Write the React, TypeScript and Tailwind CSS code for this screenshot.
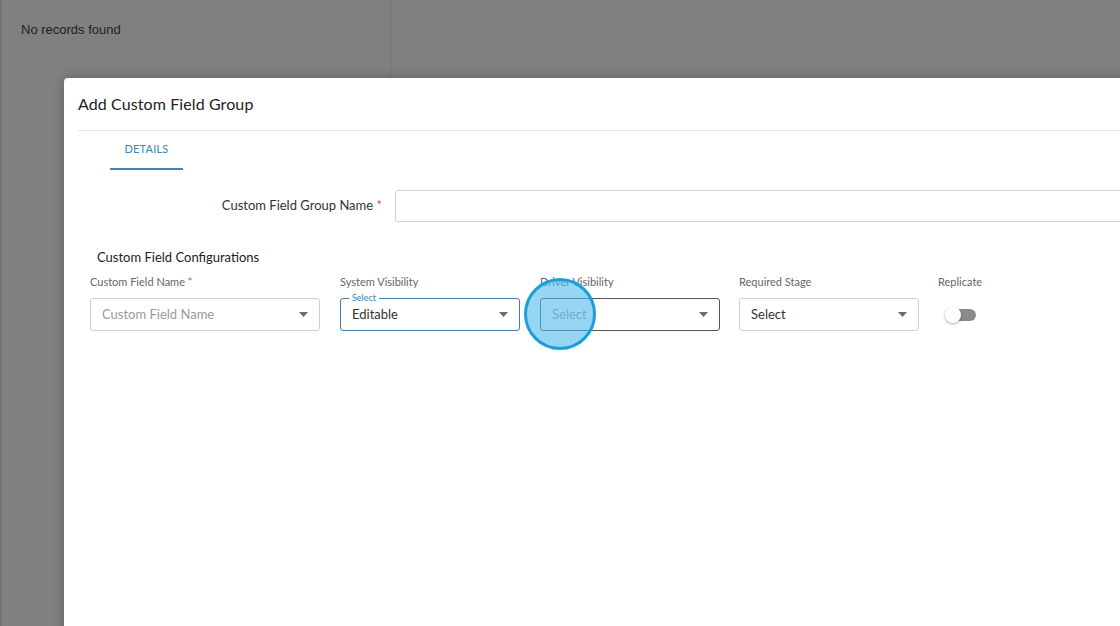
const font = { fontFamily: "Lato, 'Open Sans', sans-serif" };

function Caret() {
  return (
    <svg width="9" height="5" viewBox="0 0 9 5" className="shrink-0">
      <path d="M0 0 L9 0 L4.5 5 Z" fill="#6b6b6b" />
    </svg>
  );
}

interface SelectBoxProps {
  value: string;
  placeholder?: boolean;
  width: string;
  variant?: "default" | "focused" | "hover";
}

function SelectBox({ value, placeholder, width, variant = "default" }: SelectBoxProps) {
  const border =
    variant === "focused"
      ? "border-[#3c7ea8]"
      : variant === "hover"
        ? "border-[#555555]"
        : "border-[#cfcfcf]";
  return (
    <div className={`relative ${width} h-[33px] rounded-[3px] border ${border} flex items-center pl-[11px] pr-[11px]`}>
      {variant === "focused" && (
        <span className="absolute -top-[7px] left-[8px] bg-white px-[3px] text-[9px] leading-[12px] text-[#3c7ea8]">
          Select
        </span>
      )}
      <span className={`flex-1 text-[13px] ${placeholder ? "text-[#9a9a9a]" : "text-[#333333]"}`}>{value}</span>
      <Caret />
    </div>
  );
}

export default function App() {
  return (
    <div className="relative w-[1120px] h-[626px] overflow-hidden bg-[#808080]" style={font}>
      {/* page behind the dialog */}
      <div className="flex h-full">
        <div className="w-[2px] bg-[#747474]" />
        <div className="w-[389px] pt-[20px] pl-[19px] border-r border-[#747474]">
          <p className="text-[13px] text-[#1f1f1f]" style={{ fontFamily: "'Liberation Sans', Arial, sans-serif" }}>
            No records found
          </p>
        </div>
      </div>

      {/* dialog */}
      <div className="absolute left-[64px] top-[78px] w-[1200px] h-[600px] bg-white rounded-tl-[4px] shadow-[0_0_12px_rgba(0,0,0,0.25)]">
        <div className="h-[52px] flex items-center pl-[14px]">
          <h2 className="text-[16px] tracking-[0.1px] text-[#222222]">Add Custom Field Group</h2>
        </div>
        <div className="mx-[14px] border-t border-[#e2e2e2]" />

        <div className="pl-[46px]">
          <div className="w-[73px] h-[39px] flex items-center justify-center border-b-2 border-[#3d87b5]">
            <span className="text-[11px] text-[#3d87b5] tracking-[0.2px]">DETAILS</span>
          </div>
        </div>

        <div className="mt-[20px] flex items-center pl-[14px]">
          <label className="w-[304px] text-right text-[13px] text-[#333333]">
            Custom Field Group Name <span className="text-[#d9534f]">*</span>
          </label>
          <div className="ml-[13px] w-[760px] h-[32px] rounded-[3px] border border-[#d0d0d0]" />
        </div>

        <div className="mt-[26px] pl-[33px] text-[13px] text-[#222222]">Custom Field Configurations</div>

        <div className="mt-[6px] pl-[26px] flex gap-[20px]">
          <div className="flex flex-col gap-[8px]">
            <span className="text-[11px] text-[#666666]">
              Custom Field Name <span className="text-[#d9534f]">*</span>
            </span>
            <SelectBox value="Custom Field Name" placeholder width="w-[230px]" />
          </div>
          <div className="flex flex-col gap-[8px]">
            <span className="text-[11px] text-[#666666]">System Visibility</span>
            <SelectBox value="Editable" width="w-[180px]" variant="focused" />
          </div>
          <div className="flex flex-col gap-[8px]">
            <span className="text-[11px] text-[#666666]">Driver Visibility</span>
            <SelectBox value="Select" placeholder width="w-[180px]" variant="hover" />
          </div>
          <div className="flex flex-col gap-[8px] -ml-[1px]">
            <span className="text-[11px] text-[#666666]">Required Stage</span>
            <SelectBox value="Select" width="w-[180px]" />
          </div>
          <div className="flex flex-col gap-[8px] -ml-[1px]">
            <span className="text-[11px] text-[#666666]">Replicate</span>
            <div className="h-[33px] flex items-center pl-[7px]">
              <div className="relative w-[31px] h-[12px]">
                <div className="absolute left-[6px] right-0 top-0 bottom-0 rounded-full bg-[#8a8a8a]" />
                <div className="absolute left-0 -top-[2px] w-[16px] h-[16px] rounded-full bg-white shadow-[0_1px_3px_rgba(0,0,0,0.35)]" />
              </div>
            </div>
          </div>
        </div>
      </div>

      {/* click indicator */}
      <div className="absolute left-[524px] top-[278px] w-[72px] h-[72px] rounded-full border-[3px] border-[#1aa0d8] bg-[rgba(80,185,235,0.6)]" />
    </div>
  );
}
